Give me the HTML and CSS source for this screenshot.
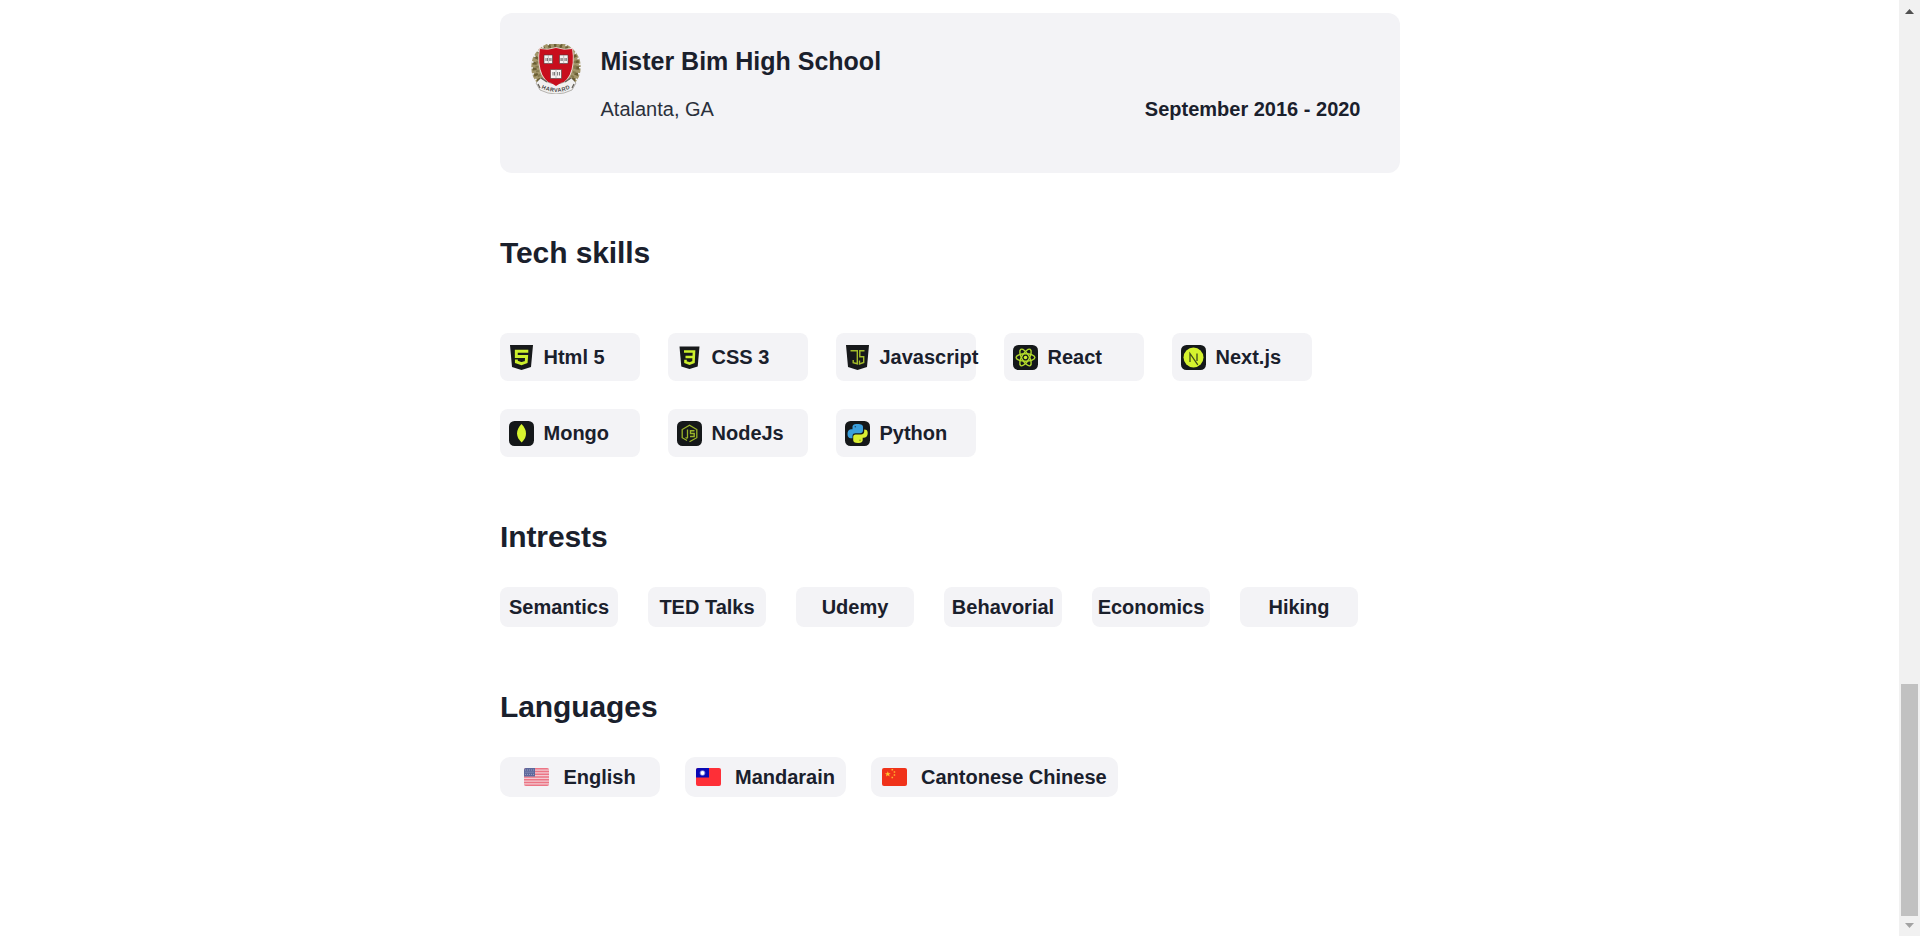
FILE: index.html
```html
<!DOCTYPE html>
<html lang="en">
<head>
<meta charset="utf-8">
<title>Resume</title>
<link rel="stylesheet" href="styles.css">
</head>
<body>
<div class="viewport">
<main class="page">
  <article class="school">
    <svg class="crest" viewBox="0 0 50 50">
      <circle cx="25" cy="23" r="20.500" fill="none" stroke="#a3966a" stroke-width="8.500"/>
      <circle cx="25" cy="23" r="21.500" fill="none" stroke="#6a5e33" stroke-width="4" stroke-dasharray="2.500 3.300"/>
      <circle cx="25" cy="23" r="24" fill="none" stroke="#f3f3f6" stroke-width="2" stroke-dasharray="1.500 4.600"/>
      <circle cx="25" cy="23" r="19" fill="none" stroke="#857a4e" stroke-width="3" stroke-dasharray="2 2.500"/>
      <path d="M8.500 4.500Q17 6.500 25 3.500Q33 6.500 41.500 4.500Q44 20 39 31Q34 40 25 43Q16 40 11 31Q6 20 8.500 4.500Z" fill="#c80f1d" stroke="#f3e9e5" stroke-width=".8"/>
      <path d="M5 39L10 34Q25 46 40 34L45 39L41 46Q25 54 9 46Z" fill="#f1f0ef" stroke="#9a9791" stroke-width=".7"/>
      <path d="M14 31Q18 38 25 42Q32 38 36 31Z" fill="#c80f1d"/>
      <path d="M10 34l6 4M40 34l-6 4M7 40l2 4M43 40l-2 4" stroke="#66615a" stroke-width="1.300"/>
      <path id="motto" d="M10 44Q25 52 40 44" fill="none"/>
      <text class="motto"><textPath href="#motto" startOffset="50%" text-anchor="middle">HARVARD</textPath></text>
      <g fill="#f7f3f2" stroke="#4a3b3b" stroke-width=".6">
        <path d="M13 11h8.500v8.500h-8.500zM28.500 11h8.500v8.500h-8.500zM19.500 25.500h11v9h-11z"/>
      </g>
      <path d="M17.300 11v8.500M32.700 11v8.500M25 25.500v9" stroke="#999" stroke-width=".6"/>
      <path d="M15 14v3M16.500 14v3M18.800 14v3M20 14v3M30 14v3M31.200 14v3M34 14v3M35.300 14v3M22 28v3.500M23.500 28v3.500M26.600 28v3.500M28.500 28v3.500" stroke="#444" stroke-width=".7"/>
    </svg>
    <div class="school-body">
      <h3 class="school-name">Mister Bim High School</h3>
      <div class="school-meta"><span class="place">Atalanta, GA</span><span class="dates">September 2016 - 2020</span></div>
    </div>
  </article>

  <section class="section tech">
    <h2 class="heading">Tech skills</h2>
    <ul class="skills">
      <li class="skill"><svg class="icon" viewBox="0 0 25 25"><path d="M1 0H24L22 22L12.500 25L3 22Z" fill="#17191b"/><path d="M19.300 6.300H7.300V11.500H17.600L17.200 17L12.500 18.600L7.400 17V14.500" fill="none" stroke="#cdef2d" stroke-width="2.900"/></svg>Html 5</li>
      <li class="skill"><svg class="icon" viewBox="0 0 25 25"><path d="M2.500 1.500H22.500L20.700 21.500L12.500 24L4.300 21.500Z" fill="#17191b"/><path d="M7 6.500H17L16.500 17L12.500 18.600L8.500 17.200V14.800M8.500 12H16.500" fill="none" stroke="#cdef2d" stroke-width="2.600"/></svg>CSS 3</li>
      <li class="skill"><svg class="icon" viewBox="0 0 25 25"><path d="M1 0H24L22 22L12.500 25L3 22Z" fill="#17191b"/><path d="M5.500 5.700H12.300V18.800L8.200 17.700V15M19.500 5.700H14.800V11.700H18.700V17.500L14.500 19V15.500" fill="none" stroke="#a4bd2b" stroke-width="1.400"/></svg>Javascript</li>
      <li class="skill"><svg class="icon" viewBox="0 0 25 25"><rect width="25" height="25" rx="5.500" fill="#15181a"/><g fill="none" stroke="#b4dc2c" stroke-width="1.400"><ellipse cx="12.500" cy="12.500" rx="9.400" ry="3.700"/><ellipse cx="12.500" cy="12.500" rx="9.400" ry="3.700" transform="rotate(60 12.500 12.500)"/><ellipse cx="12.500" cy="12.500" rx="9.400" ry="3.700" transform="rotate(120 12.500 12.500)"/></g><circle cx="12.500" cy="12.500" r="1.800" fill="#cdef2d"/></svg>React</li>
      <li class="skill"><svg class="icon" viewBox="0 0 25 25"><rect width="25" height="25" rx="5.500" fill="#15181a"/><circle cx="12.500" cy="12.500" r="10" fill="#d5f22e"/><path d="M9 17V8.500L16.800 19.800M16 8.500V16" fill="none" stroke="#3f4a1c" stroke-width="1.300"/></svg>Next.js</li>
      <li class="skill"><svg class="icon" viewBox="0 0 25 25"><rect width="25" height="25" rx="5.500" fill="#15181a"/><path d="M12.500 3C18.500 9 18.500 16 12.700 21.500C6.500 16 6.500 9 12.500 3Z" fill="#d8f52f"/></svg>Mongo</li>
      <li class="skill"><svg class="icon" viewBox="0 0 25 25"><rect width="25" height="25" rx="5.500" fill="#15181a"/><path d="M10.500 17V8.500M10.500 17.500L8.500 16.500M10 19.500L5.200 16.700V8.500L12.500 4.200L19.800 8.500V16.700L12.500 20.800" fill="none" stroke="#9ab42a" stroke-width="1.300"/><path d="M17.500 9.700H13.500V12.500H17.200V15.500H13" fill="none" stroke="#9ab42a" stroke-width="1.400"/></svg>NodeJs</li>
      <li class="skill"><svg class="icon" viewBox="0 0 25 25"><rect width="25" height="25" rx="5.500" fill="#15181a"/><path d="M12.500 3C8 3 7.500 4.500 7.500 6V8.300H6C3.500 8.300 2.500 10.500 2.500 13S3.500 17.300 6 17.300H7.500V15C7.500 13 9 12.300 10.500 12.300H15C17 12.300 18 11 18 9.500V6C18 4 16.500 3 12.500 3Z" fill="#3b9fdc"/><path d="M12.700 22C17 22 17.700 20.500 17.700 19V16.700H19C21.700 16.700 22.700 14.500 22.700 12S21.700 8.500 19.200 8.500V10.500C19.200 12.500 17.700 13.500 16 13.500H10.500C9 13.500 8.200 14.500 8.200 16V19C8.200 21 9.500 22 12.700 22Z" fill="#d9ee32"/><circle cx="10.300" cy="5.700" r=".8" fill="#1b4a68"/><circle cx="15" cy="19.300" r=".8" fill="#7e9119"/></svg>Python</li>
    </ul>
  </section>

  <section class="section interests">
    <h2 class="heading">Intrests</h2>
    <ul class="tags">
      <li class="tag">Semantics</li><li class="tag">TED Talks</li><li class="tag">Udemy</li><li class="tag">Behavorial</li><li class="tag">Economics</li><li class="tag">Hiking</li>
    </ul>
  </section>

  <section class="section langs">
    <h2 class="heading">Languages</h2>
    <ul class="languages">
      <li class="language"><svg class="flag" viewBox="0 0 25 18"><rect width="25" height="18" fill="#f3cbd2"/><path d="M0 .7H25M0 3.460H25M0 6.230H25M0 9H25M0 11.770H25M0 14.540H25M0 17.300H25" stroke="#ec7585" stroke-width="1.400"/><rect width="11" height="8.500" fill="#5d689c"/><path d="M1 2H10M1.500 4.200H10M1 6.400H10" stroke="#a9aecb" stroke-width=".8" stroke-dasharray="1 1"/></svg>English</li>
      <li class="language"><svg class="flag" viewBox="0 0 25 18"><rect width="25" height="18" fill="#fe2f37"/><rect width="13" height="9.500" fill="#0909b5"/><circle cx="6.500" cy="5" r="2.800" fill="#7d7fe0"/><circle cx="6.500" cy="5" r="1.900" fill="#fff"/></svg>Mandarain</li>
      <li class="language"><svg class="flag" viewBox="0 0 25 18"><rect width="25" height="18" fill="#f0321a"/><path d="M5.800 3.200l.8 2h2.100l-1.700 1.300.7 2.100-1.900-1.300-1.900 1.300.7-2.100-1.700-1.300h2.100z" fill="#ffc530"/><path d="M9.500 1.700h1.600M11.700 4h1.500M11.700 7h1.500M9.500 9.500h1.600" stroke="#ffb52b" stroke-width="1.400"/></svg>Cantonese Chinese</li>
    </ul>
  </section>
</main>
<aside class="scrollbar">
  <svg class="arrow" viewBox="0 0 9 5"><path d="M0 5L4.500 0L9 5Z" fill="#505050"/></svg>
  <div class="thumb"></div>
  <svg class="arrow" viewBox="0 0 9 5"><path d="M0 0L4.500 5L9 0Z" fill="#a3a3a3"/></svg>
</aside>
</div>
</body>
</html>
```

FILE: styles.css
```css
* { box-sizing: border-box; }
body {
  margin: 0;
  background: #fff;
  color: #1a202c;
  font: 20px/24px "Liberation Sans", Arial, sans-serif;
  overflow: hidden;
}
ul, h2, h3 { margin: 0; padding: 0; }
ul { list-style: none; }
svg { display: block; flex: none; }

.viewport { display: flex; height: 936px; }
.page { width: 900px; margin: 0 auto 0 500px; padding-top: 13px; }

.school {
  display: flex;
  gap: 19.5px;
  height: 160px;
  padding: 31px 39.5px 0 31px;
  border-radius: 12px;
  background: #f3f3f6;
}
.crest { width: 50px; height: 50px; }
.motto { font: bold 5.5px "Liberation Sans", sans-serif; fill: #444; letter-spacing: .5px; }
.school-body { flex: 1; padding-top: 2px; }
.school-name { font-size: 25px; line-height: 30px; font-weight: 700; }
.school-meta { display: flex; justify-content: space-between; margin-top: 21px; }
.place { color: #2a303b; }
.dates { font-weight: 700; }

.section { padding-top: 62px; }
.heading { font-size: 30px; line-height: 36px; font-weight: 700; letter-spacing: -.1px; }

.skills { display: flex; flex-wrap: wrap; gap: 28px; margin-top: 62px; font-weight: 700; }
.skill {
  display: flex;
  align-items: center;
  gap: 9.5px;
  width: 140px;
  height: 48px;
  padding: 0 9px;
  border-radius: 8px;
  background: #f3f3f6;
  white-space: nowrap;
}
.icon { width: 25px; height: 25px; }

.tags { display: flex; gap: 30px; margin-top: 32px; font-weight: 700; }
.tag {
  width: 118px;
  padding: 8px 0;
  border-radius: 8px;
  background: #f3f3f6;
  text-align: center;
  white-space: nowrap;
}

.languages { display: flex; gap: 25px; margin-top: 32px; font-weight: 700; }
.language {
  display: flex;
  align-items: center;
  justify-content: center;
  gap: 14px;
  min-width: 160px;
  height: 40px;
  padding: 0 11px;
  border-radius: 10px;
  background: #f3f3f6;
}
.flag { width: 25px; height: 18px; border-radius: 2px; }

.scrollbar {
  display: flex;
  flex-direction: column;
  align-items: center;
  width: 21px;
  padding: 9px 0 8px;
  background: #f1f1f1;
}
.arrow { width: 9px; height: 5px; }
.thumb { width: 17px; height: 232px; margin: auto 0 7px; background: #c1c1c1; }
```
